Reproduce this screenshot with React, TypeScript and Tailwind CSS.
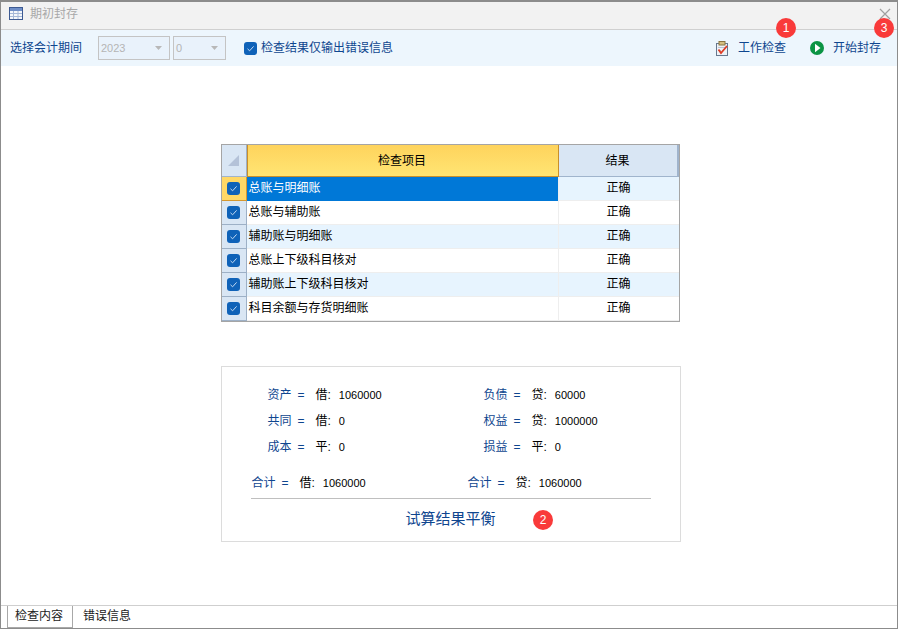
const CJK = "font-['Liberation_Sans','Noto_Sans_CJK_SC',sans-serif]";

const checks = [
  { label: "总账与明细账", result: "正确" },
  { label: "总账与辅助账", result: "正确" },
  { label: "辅助账与明细账", result: "正确" },
  { label: "总账上下级科目核对", result: "正确" },
  { label: "辅助账上下级科目核对", result: "正确" },
  { label: "科目余额与存货明细账", result: "正确" },
];

const balances = [
  { left: ["资产", "借", "1060000"], right: ["负债", "贷", "60000"] },
  { left: ["共同", "借", "0"], right: ["权益", "贷", "1000000"] },
  { left: ["成本", "平", "0"], right: ["损益", "平", "0"] },
];

function Badge({ n, className }: { n: number; className: string }) {
  return (
    <span
      className={`absolute flex h-5 w-5 items-center justify-center rounded-full bg-[#f93a3a] text-xs text-white ${className}`}
    >
      {n}
    </span>
  );
}

function CheckBox() {
  return (
    <span className="flex h-[13px] w-[13px] items-center justify-center rounded-[3px] bg-[#0f62b8]">
      <svg width="9" height="9" viewBox="0 0 9 9" fill="none">
        <path d="M1.500 4.800 3.600 6.800 7.600 2.400" stroke="#c4daf2" strokeWidth="1" />
      </svg>
    </span>
  );
}

function Select({ value, width }: { value: string; width: string }) {
  return (
    <div
      className={`flex h-[24px] items-center justify-between border border-[#c4c4c4] bg-[#e9f2fb] pl-[2px] pr-[7px] text-[11px] text-[#b5b5b5] ${width}`}
    >
      <span>{value}</span>
      <svg width="7" height="4" viewBox="0 0 7 4">
        <path d="M0 0h7L3.500 4z" fill="#b8b8b8" />
      </svg>
    </div>
  );
}

function TableIcon() {
  return (
    <svg width="14" height="13" viewBox="0 0 14 13">
      <rect x="0.500" y="0.500" width="13" height="12" fill="#f4f7fb" stroke="#3d5a92" />
      <rect x="1" y="1" width="12" height="3" fill="#6f8fc8" />
      <path d="M1 6.500h12M1 9.500h12M4.500 4v8M9 4v8" stroke="#a5b8d8" strokeWidth="1" />
    </svg>
  );
}

function ClipboardIcon() {
  return (
    <svg width="14" height="15" viewBox="0 0 14 15">
      <rect x="1.500" y="2.500" width="11" height="12" fill="#eef2f7" stroke="#66788f" />
      <rect x="4" y="0.500" width="6" height="3.500" fill="#d4bf80" stroke="#8a7440" />
      <path d="M3 6.500h8M3 9.500h3" stroke="#b9c3d3" />
      <path d="M3.500 8.500 6 12 12 5" stroke="#df3c24" strokeWidth="1.800" fill="none" />
    </svg>
  );
}

function PlayIcon() {
  return (
    <svg width="14" height="14" viewBox="0 0 14 14" className="block">
      <circle cx="7" cy="7" r="7" fill="#0b9444" />
      <path d="M5 2.800 10.500 7 5 11.200z" fill="#fff" />
    </svg>
  );
}

function Balance({ item, className }: { item: string[]; className: string }) {
  return (
    <div className={`flex h-[26px] items-center pb-[2px] ${className}`}>
      <span className="flex w-[48px] shrink-0 text-[#0f468f]">
        {item[0]}
        <span className="ml-[6px]">=</span>
      </span>
      <span className="text-black">{item[1]}:</span>
      <span className="ml-[8px] text-[11px] text-black">{item[2]}</span>
    </div>
  );
}

export default function App() {
  return (
    <div
      className={`relative flex h-[629px] w-[898px] flex-col overflow-hidden border border-t-2 border-[#8c8c8c] bg-white text-xs ${CJK}`}
    >
      <div className="flex h-[28px] shrink-0 items-center justify-between border-b border-[#d0d0d0] bg-[#f2f2f2] pb-[4px] pl-[8px] pr-[6px]">
        <div className="flex items-center gap-[7px] text-[#a8a8a8]">
          <TableIcon />
          <span>期初封存</span>
        </div>
        <svg width="12" height="12" viewBox="0 0 12 12">
          <path d="M1 1l10 10M11 1 1 11" stroke="#a0a0a0" strokeWidth="1.200" />
        </svg>
      </div>

      <div className="flex h-[36px] shrink-0 items-center justify-between bg-[#edf6fd] pl-[9px] pr-[16px] text-[#0f468f]">
        <div className="flex items-center">
          <span className="w-[88px]">选择会计期间</span>
          <Select value="2023" width="w-[72px]" />
          <div className="w-[3px]" />
          <Select value="0" width="w-[53px]" />
          <div className="ml-[18px] flex items-center gap-[4px]">
            <CheckBox />
            <span>检查结果仅输出错误信息</span>
          </div>
        </div>
        <div className="flex items-center">
          <ClipboardIcon />
          <span className="ml-[9px]">工作检查</span>
          <span className="ml-[24px]">
            <PlayIcon />
          </span>
          <span className="ml-[9px]">开始封存</span>
        </div>
      </div>

      <div className="flex flex-1 flex-col items-center">
        <div className="ml-[2px] mt-[78px] w-[459px] border border-[#a5a5a5]">
          <div className="flex h-[32px] border-b border-[#a0b4cc]">
            <div className="flex w-[25px] shrink-0 items-center justify-center border-r border-[#9db0c6] bg-[#d9e6f4]">
              <svg width="11" height="11" viewBox="0 0 11 11">
                <path d="M11 0v11H0z" fill="#b4c2d8" />
              </svg>
            </div>
            <div className="-mb-px flex flex-1 items-center justify-center border border-t-0 border-[#c98f2a] bg-gradient-to-b from-[#fed35c] to-[#ffe573] pr-[1px] text-black">
              检查项目
            </div>
            <div className="flex w-[120px] shrink-0 items-center justify-center border-r-2 border-[#a0b4cc] bg-[#d9e6f4] text-black">
              结果
            </div>
          </div>
          {checks.map((row, i) => (
            <div key={row.label} className={`flex h-[24px] ${i % 2 === 0 ? "bg-[#e7f4fe]" : "bg-white"}`}>
              <div
                className={`flex w-[25px] shrink-0 items-center justify-center border-r border-b ${i === 0 ? "border-[#d6972e] bg-[#ffd866]" : "border-[#9db0c6] bg-[#d9e6f4]"}`}
              >
                <CheckBox />
              </div>
              <div
                className={`flex flex-1 items-center border-b pb-[2px] pl-[2px] ${i === 0 ? "border-[#0078d7] bg-[#0078d7] text-white" : "border-[#eeeeee] text-black"}`}
              >
                {row.label}
              </div>
              <div className="flex w-[121px] shrink-0 items-center justify-center border-b border-l border-[#eeeeee] pb-[2px] text-black">
                {row.result}
              </div>
            </div>
          ))}
        </div>

        <div className="ml-[3px] mt-[44px] flex h-[176px] w-[460px] flex-col border border-[#dcdcdc] px-[29px] pt-[16px]">
          {balances.map((row) => (
            <div key={row.left[0]} className="grid grid-cols-[216px_1fr]">
              <Balance item={row.left} className="pl-[17px]" />
              <Balance item={row.right} className="pl-[17px]" />
            </div>
          ))}
          <div className="mt-[10px] grid grid-cols-[216px_1fr]">
            <Balance item={["合计", "借", "1060000"]} className="pl-[1px]" />
            <Balance item={["合计", "贷", "1060000"]} className="pl-[1px]" />
          </div>
          <div className="mt-[1px] h-px bg-[#bfbfbf]" />
          <div className="mt-[10px] text-center text-[15px] text-[#0f468f]">试算结果平衡</div>
        </div>
      </div>

      <div className="flex h-[23px] shrink-0 items-end border-t border-[#cfcfcf] pl-[6px] text-[#222]">
        <div className="-mt-px flex h-[22px] w-[66px] items-center justify-center border-x border-b border-[#a8a8a8] bg-white pb-[2px] pr-[2px]">
          检查内容
        </div>
        <div className="flex h-[22px] items-center pb-[2px] pl-[10px]">错误信息</div>
      </div>

      <Badge n={1} className="left-[775px] top-[16px]" />
      <Badge n={2} className="left-[532px] top-[508px]" />
      <Badge n={3} className="left-[873px] top-[16px]" />
    </div>
  );
}
